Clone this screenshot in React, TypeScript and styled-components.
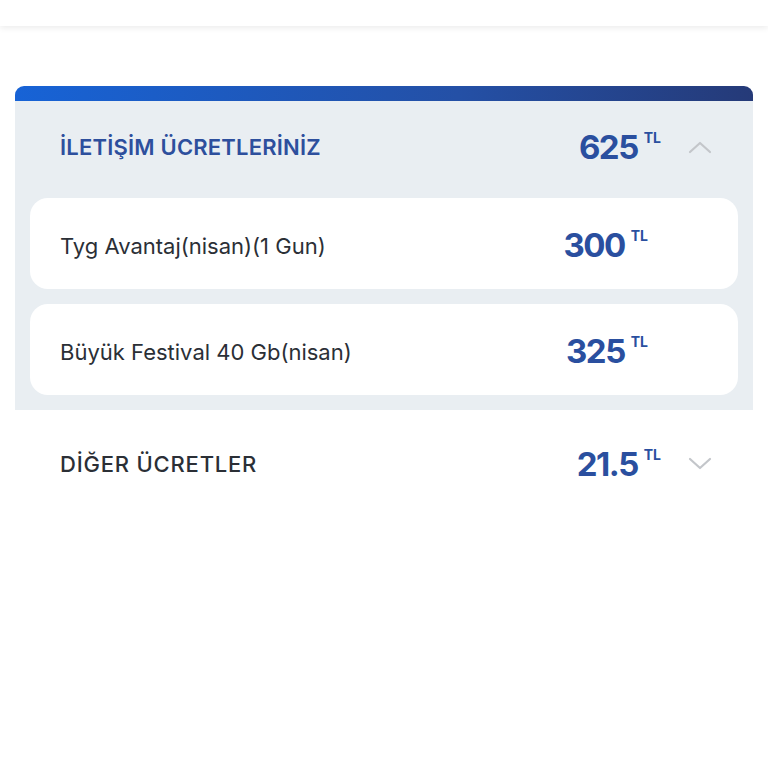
import React, {useState} from 'react';
import styled, {createGlobalStyle} from 'styled-components'

const GlobalStyle = createGlobalStyle`
  body {
    margin: 0;
    background: #ffffff;
    font-family: 'Inter', 'Liberation Sans', sans-serif;
  }
`

const TopBar = styled.header`
  height: 26px;
  background: #ffffff;
  box-shadow: 0 2px 6px rgba(0,0,0,0.08);
`

const Page = styled.main`
  padding: 60px 15px 0;
`

const Section = styled.section<{open: boolean}>`
  background: ${p => p.open ? '#e9eef2' : '#ffffff'};
`

const GradientBar = styled.div`
  height: 15px;
  border-radius: 9px 9px 0 0;
  background: linear-gradient(90deg, #1763d6 0%, #2450a6 60%, #253a78 100%);
`

const SectionHead = styled.div<{open: boolean}>`
  display: flex;
  align-items: center;
  height: ${p => p.open ? '92px' : '108px'};
  padding: 0 41px ${p => p.open ? '5px' : '0'} 45px;
  cursor: pointer;
`

const Title = styled.h2<{open: boolean}>`
  flex: 1;
  margin: 0;
  font-size: 22px;
  font-weight: ${p => p.open ? 600 : 500};
  letter-spacing: ${p => p.open ? '0.2px' : '0.8px'};
  color: ${p => p.open ? '#2d4f9d' : '#2b2f36'};
`

const Price = styled.div`
  display: flex;
  align-items: flex-start;
  color: #2a4f9f;
  font-weight: 700;
  font-size: 33px;
  line-height: 1;
  letter-spacing: -1.5px;
`

const Currency = styled.span`
  font-size: 14px;
  letter-spacing: 0;
  margin-left: 6px;
`

const Chevron = styled.svg`
  width: 24px;
  height: 14px;
  margin-left: 27px;
  color: #c3c6ca;
`

const Items = styled.div`
  display: flex;
  flex-direction: column;
  gap: 15px;
  padding: 0 15px 15px;
`

const Item = styled.div`
  display: flex;
  align-items: center;
  box-sizing: border-box;
  height: 91px;
  padding: 4px 90px 0 30px;
  background: #ffffff;
  border-radius: 18px;
`

const ItemName = styled.span`
  flex: 1;
  font-size: 22px;
  color: #2b2f36;
`

type Row = { name: string, amount: string }

const data: Array<{title: string, amount: string, items: Row[]}> = [
    {
        title: 'İLETİŞİM ÜCRETLERİNİZ',
        amount: '625',
        items: [
            {name: 'Tyg Avantaj(nisan)(1 Gun)', amount: '300'},
            {name: 'Büyük Festival 40 Gb(nisan)', amount: '325'},
        ]
    },
    {title: 'DİĞER ÜCRETLER', amount: '21.5', items: []},
]

const App = () => {
    const [open, setOpen] = useState(0)

    return (
        <>
            <GlobalStyle/>
            <TopBar/>
            <Page>
                <GradientBar/>
                {data.map((section, index) => {
                    const isOpen = open === index
                    return (
                        <Section open={isOpen} key={section.title}>
                            <SectionHead open={isOpen} onClick={() => setOpen(isOpen ? -1 : index)}>
                                <Title open={isOpen}>{section.title}</Title>
                                <Price>{section.amount}<Currency>TL</Currency></Price>
                                <Chevron viewBox="0 0 24 14" fill="none" stroke="currentColor" strokeWidth="2.2"
                                         strokeLinecap="round" strokeLinejoin="round">
                                    {isOpen ? <path d="M2 12 L12 3 L22 12"/> : <path d="M2 2 L12 11 L22 2"/>}
                                </Chevron>
                            </SectionHead>
                            {isOpen && (
                                <Items>
                                    {section.items.map(item => (
                                        <Item key={item.name}>
                                            <ItemName>{item.name}</ItemName>
                                            <Price>{item.amount}<Currency>TL</Currency></Price>
                                        </Item>
                                    ))}
                                </Items>
                            )}
                        </Section>
                    )
                })}
            </Page>
        </>
    );
}

export default App;
